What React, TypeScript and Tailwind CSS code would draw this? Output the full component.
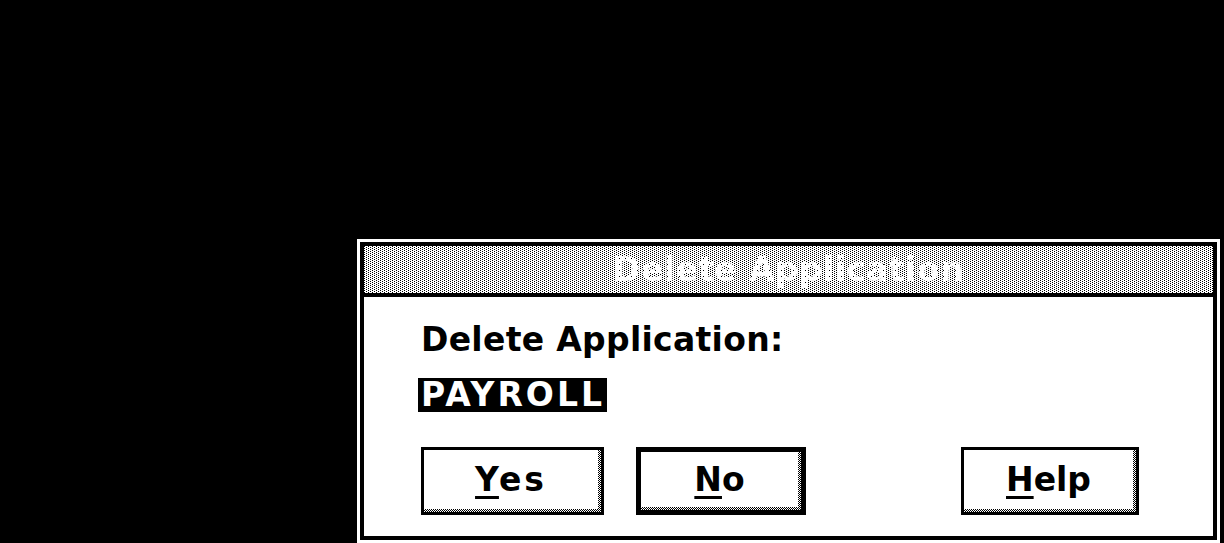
import React from "react";

const dotsTitle =
  "bg-white [background-image:conic-gradient(at_1px_1px,transparent_75%,#000_0),conic-gradient(at_1px_1px,transparent_75%,#000_0)] [background-size:4px_2px] [background-position:0_0,2px_1px]";
const dotsShade =
  "bg-white [background-image:conic-gradient(at_1px_1px,transparent_75%,#000_0),conic-gradient(at_1px_1px,transparent_75%,#000_0)] [background-size:2px_2px] [background-position:0_0,1px_1px]";
const dotsText =
  "bg-white [background-image:conic-gradient(at_1px_1px,transparent_75%,#000_0)] [background-size:6px_6px] bg-clip-text text-transparent";

function Btn({
  label,
  u,
  rest,
  w,
  thick,
  ml,
  track,
}: {
  label: string;
  u: string;
  rest: string;
  w: string;
  thick?: boolean;
  ml: string;
  track: string;
}) {
  return (
    <div
      className={`${w} ${ml} h-[68px] flex border-black ${thick ? "border-[5px]" : "border-[3px]"} ${dotsShade}`}
      aria-label={label}
    >
      <div className="flex-1 mr-[3px] mb-[3px] bg-white flex items-center justify-center pt-[1px]">
        <span className={`text-[33px] leading-[36px] font-bold ${track} text-black`}>
          <span className="underline decoration-[3px] underline-offset-[5px]">{u}</span>
          {rest}
        </span>
      </div>
    </div>
  );
}

export default function App() {
  return (
    <div className="w-[1224px] h-[543px] overflow-hidden bg-black font-['DejaVu_Sans',sans-serif] pl-[357px] pt-[239px]">
      <div className="w-[863px] h-[304px] border-[3px] border-white flex">
        <div className="flex-1 border-[4px] border-black flex flex-col bg-white">
          <div className={`h-[51px] border-b-[4px] border-black flex items-center justify-center ${dotsTitle}`}>
            <span className={`text-[33px] leading-[36px] font-bold tracking-[0.4px] ${dotsText}`}>
              Delete Application
            </span>
          </div>
          <div className="flex-1 flex flex-col pl-[57px] pt-[25px]">
            <div className="text-[33px] leading-[36px] font-bold tracking-[0.3px] text-black">
              Delete Application:
            </div>
            <div className="mt-[20px] flex">
              <span className="bg-black text-white text-[33px] leading-[34px] font-bold tracking-[3px] pl-[3px] pr-[2px] -ml-[3px]">
                PAYROLL
              </span>
            </div>
            <div className="mt-[35px] flex">
              <Btn label="Yes" u="Y" rest="es" w="w-[183px]" ml="ml-0" track="tracking-[3px]" />
              <Btn label="No" u="N" rest="o" w="w-[170px]" ml="ml-[32px]" thick track="tracking-[0px]" />
              <Btn label="Help" u="H" rest="elp" w="w-[178px]" ml="ml-[155px]" track="tracking-[0px]" />
            </div>
          </div>
        </div>
      </div>
    </div>
  );
}
